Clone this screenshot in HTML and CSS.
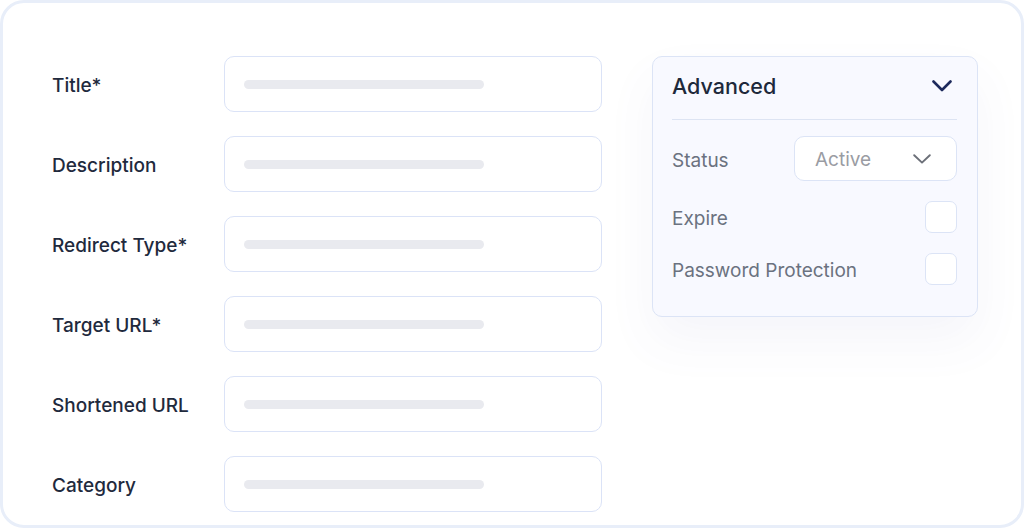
FILE: index.html
```html
<!DOCTYPE html>
<html lang="en">
<head>
    <meta charset="UTF-8">
    <meta name="viewport" content="width=device-width, initial-scale=1.0">
    <title>New Link</title>
    <link rel="stylesheet" href="styles.css">
</head>
<body>
    <div class="card">
        <div class="form">
            <div class="row">
                <label class="label">Title*</label>
                <div class="input"><span class="bar"></span></div>
            </div>
            <div class="row">
                <label class="label">Description</label>
                <div class="input"><span class="bar"></span></div>
            </div>
            <div class="row">
                <label class="label">Redirect Type*</label>
                <div class="input"><span class="bar"></span></div>
            </div>
            <div class="row">
                <label class="label">Target URL*</label>
                <div class="input"><span class="bar"></span></div>
            </div>
            <div class="row">
                <label class="label">Shortened URL</label>
                <div class="input"><span class="bar"></span></div>
            </div>
            <div class="row">
                <label class="label">Category</label>
                <div class="input"><span class="bar"></span></div>
            </div>
        </div>

        <div class="panel">
            <div class="panel-head">
                <span>Advanced</span>
                <svg class="head-chevron" width="20" height="12" viewBox="0 0 20 12">
                    <polyline points="1.5,1.5 10,10 18.5,1.5" fill="none" stroke="#1d2a5c" stroke-width="2.6" stroke-linecap="round" stroke-linejoin="round"/>
                </svg>
            </div>
            <div class="opt">
                <span class="opt-label">Status</span>
                <div class="select">
                    <span>Active</span>
                    <svg width="18" height="10" viewBox="0 0 18 10">
                        <polyline points="1.2,1.2 9,8.6 16.8,1.2" fill="none" stroke="#6b6f78" stroke-width="1.9" stroke-linecap="round" stroke-linejoin="round"/>
                    </svg>
                </div>
            </div>
            <div class="opt">
                <span class="opt-label">Expire</span>
                <span class="check"></span>
            </div>
            <div class="opt">
                <span class="opt-label">Password Protection</span>
                <span class="check"></span>
            </div>
        </div>
    </div>
</body>
</html>
```

FILE: styles.css
```css
body {
    margin: 0;
    font-family: Inter, "Noto Sans", sans-serif;
    background: #ffffff;
}
.card {
    box-sizing: border-box;
    width: 1024px;
    height: 528px;
    border: 3px solid #e8eef9;
    border-radius: 24px;
    background: #ffffff;
    display: flex;
    align-items: flex-start;
    padding: 53px 0 0 49px;
}
.form {
    display: flex;
    flex-direction: column;
    gap: 24px;
}
.row {
    display: grid;
    grid-template-columns: 172px 378px;
    align-items: center;
}
.label {
    font-size: 19px;
    font-weight: 500;
    color: #1f2a3d;
    padding-top: 2px;
}
.input {
    box-sizing: border-box;
    height: 56px;
    border: 1px solid #dbe3f7;
    border-radius: 10px;
    display: flex;
    align-items: center;
    padding-left: 19px;
}
.bar {
    width: 240px;
    height: 9px;
    border-radius: 5px;
    background: #e9eaef;
}
.panel {
    box-sizing: border-box;
    width: 326px;
    height: 261px;
    margin-left: 50px;
    padding: 0 20px 0 19px;
    background: #f8f9ff;
    border: 1px solid #dce4f6;
    border-radius: 10px;
    box-shadow: 0 24px 50px rgba(80, 90, 170, 0.06);
}
.panel-head {
    display: flex;
    justify-content: space-between;
    align-items: center;
    height: 30px;
    padding: 14px 0 18px;
    border-bottom: 1px solid #dde4f3;
    font-size: 21.5px;
    font-weight: 500;
    color: #1e293b;
}
.head-chevron {
    margin-right: 5px;
}
.opt {
    display: flex;
    justify-content: space-between;
    align-items: center;
    margin-top: 20px;
}
.opt:nth-child(2) {
    margin-top: 16px;
}
.opt-label {
    font-size: 19px;
    color: #6b7280;
    padding-top: 3px;
}
.select {
    box-sizing: border-box;
    width: 163px;
    height: 45px;
    border: 1px solid #dce4f6;
    border-radius: 10px;
    background: #ffffff;
    display: flex;
    align-items: center;
    justify-content: space-between;
    padding: 1px 25px 0 20px;
    font-size: 19px;
    color: #9a9ca3;
}
.check {
    box-sizing: border-box;
    width: 32px;
    height: 32px;
    border: 1px solid #dce4f6;
    border-radius: 7px;
    background: #ffffff;
}
```
